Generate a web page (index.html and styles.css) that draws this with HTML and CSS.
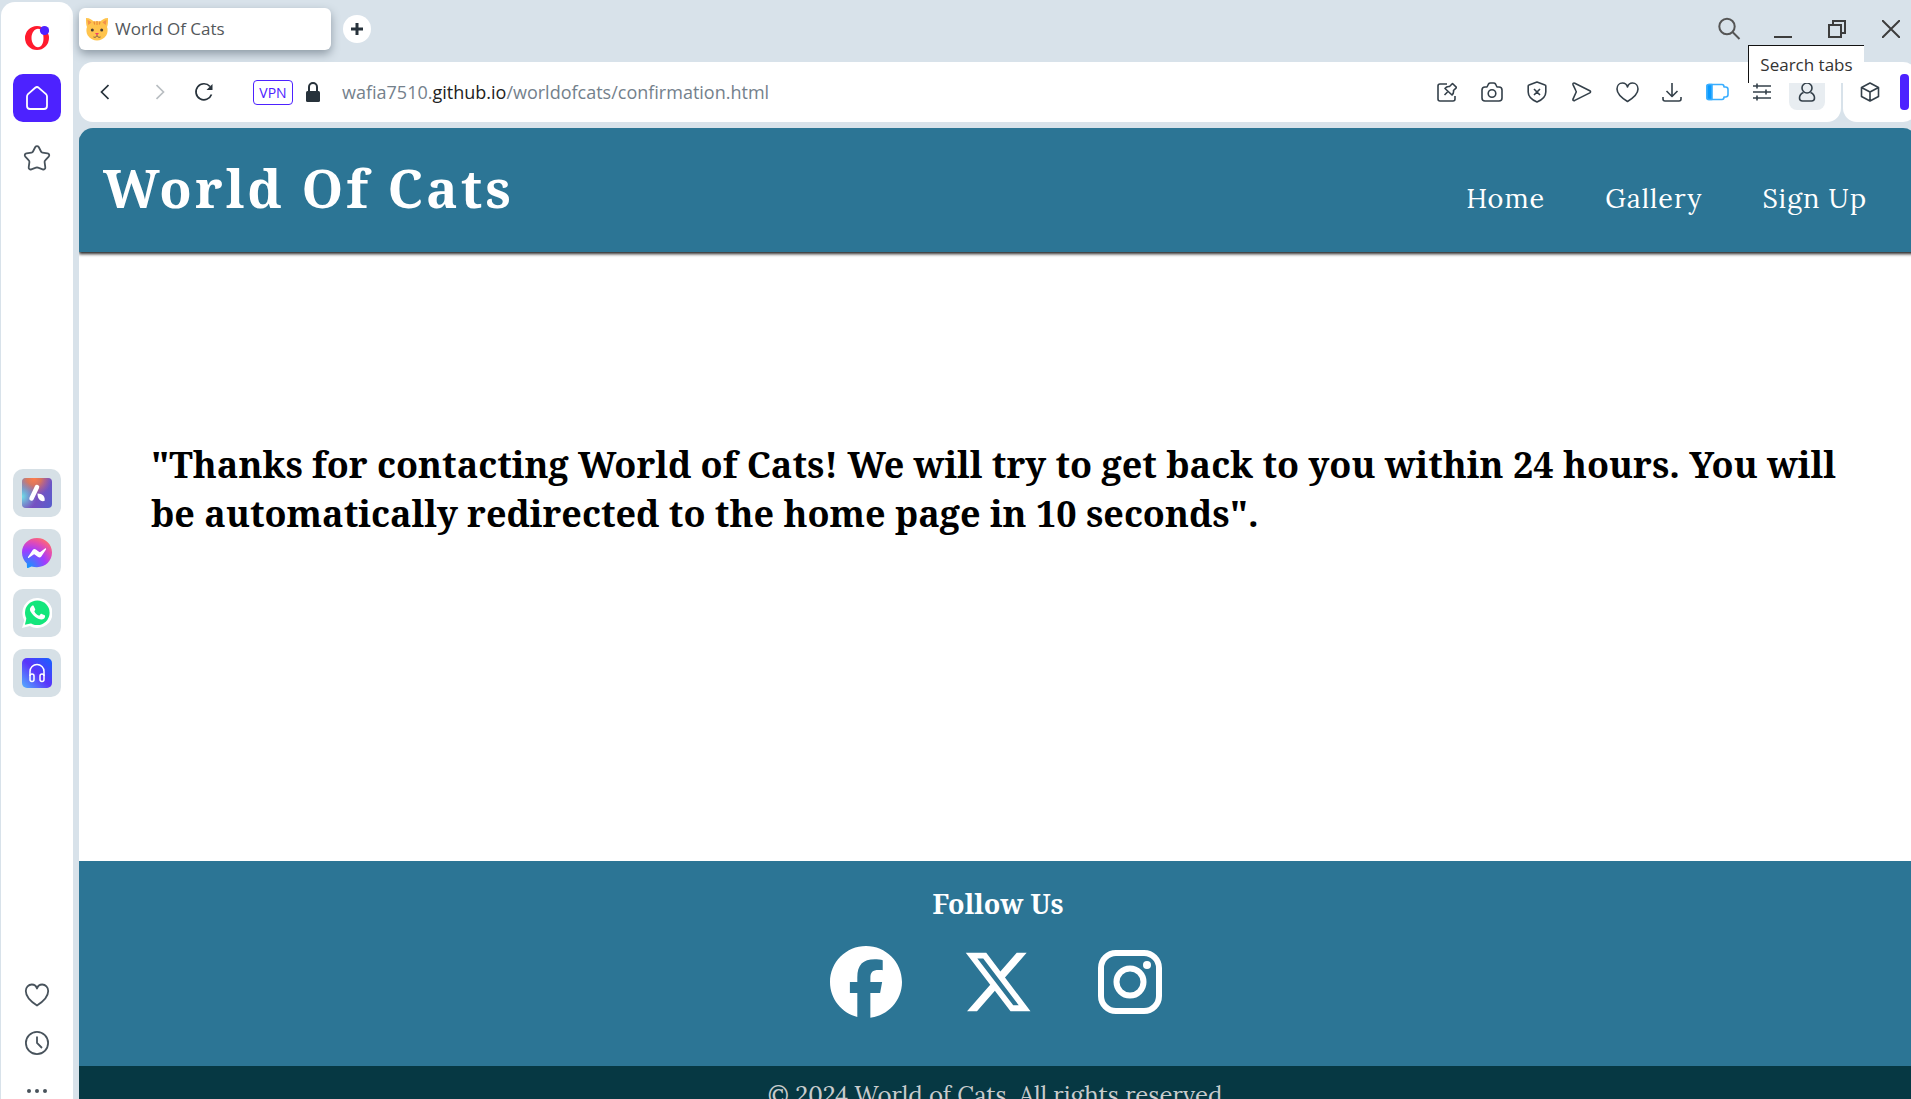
FILE: index.html
```html
<!DOCTYPE html>
<html lang="en">
<head>
<meta charset="utf-8">
<title>World Of Cats</title>
<link rel="stylesheet" href="styles.css">
</head>
<body>
<div class="browser">
  <aside class="sidebar">
    <div class="side-top">
      <button class="side-btn" aria-label="Opera menu">
        <svg width="24" height="26" viewBox="0 0 24 26"><path fill="#ff1b2d" fill-rule="evenodd" d="M12 1a12 12 0 1 0 0 24a12 12 0 0 0 0-24zM13 3.800c3.500 0 5.500 4 5.500 9.200s-2 9.200-5.500 9.200S6.500 18 6.500 13s3-9.200 6.500-9.200z"/><circle cx="19.500" cy="5.500" r="4.600" fill="#4d22ff"/></svg>
      </button>
      <button class="side-btn home" aria-label="Home">
        <svg width="24" height="26" viewBox="0 0 24 26" fill="none" stroke="#fff" stroke-width="1.800" stroke-linejoin="round"><path d="M2 11.500c0-1 .3-1.700 1-2.400l7.200-6.300c1.100-1 2.500-1 3.600 0L21 9.100c.7.700 1 1.400 1 2.400V21c0 2-1 3-3 3H5c-2 0-3-1-3-3z"/></svg>
      </button>
      <button class="side-btn" aria-label="Bookmarks">
        <svg width="28" height="28" viewBox="0 0 28 28" fill="none" stroke="#48535c" stroke-width="1.800" stroke-linejoin="round"><path d="M12.300 3c.8-1.300 2.600-1.300 3.400 0l2.300 4.500c.3.600.8 1 1.500 1.100l5 .8c1.700.3 2.300 2 1.200 3.200l-3.500 3.700c-.5.500-.7 1.100-.6 1.800l.7 5.200c.2 1.500-1.200 2.600-2.600 2l-4.700-1.600a3 3 0 0 0-2 0l-4.700 1.600c-1.400.6-2.800-.5-2.600-2l.7-5.200c.1-.7-.1-1.300-.6-1.800l-3.500-3.700c-1.100-1.200-.5-2.900 1.200-3.200l5-.8c.7-.1 1.200-.5 1.500-1.100z"/></svg>
      </button>
    </div>
    <div class="side-apps">
      <button class="side-btn app" aria-label="Aria">
        <svg width="30" height="30" viewBox="0 0 30 30"><defs><linearGradient id="ga" x1="0" y1=".3" x2="1" y2=".8"><stop offset="0" stop-color="#7a8fc0"/><stop offset=".5" stop-color="#7a50c0"/><stop offset="1" stop-color="#5a5ccb"/></linearGradient><radialGradient id="gb" cx=".4" cy="0" r=".6"><stop offset="0" stop-color="#ff7d4c"/><stop offset=".4" stop-color="#e8784f" stop-opacity=".85"/><stop offset="1" stop-color="#c46a8c" stop-opacity="0"/></radialGradient><radialGradient id="gc" cx="0" cy=".62" r=".5"><stop offset="0" stop-color="#6fe0e8"/><stop offset="1" stop-color="#6fa0d8" stop-opacity="0"/></radialGradient></defs><rect width="30" height="30" rx="4" fill="url(#ga)"/><rect width="30" height="30" rx="4" fill="url(#gb)"/><rect width="30" height="30" rx="4" fill="url(#gc)"/><path d="M15 9L9.500 20.500" stroke="#fff" stroke-width="4.500" stroke-linecap="round"/><path d="M15.500 15.500c5 0 8 3 7 7.500-5 1-7-3-7-7.500z" fill="#fff"/></svg>
      </button>
      <button class="side-btn app" aria-label="Messenger">
        <svg width="30" height="30" viewBox="0 0 30 30"><defs><radialGradient id="gm" cx=".2" cy="1" r="1.100"><stop offset="0" stop-color="#0b9bff"/><stop offset=".55" stop-color="#a13cff"/><stop offset=".8" stop-color="#e14cb5"/><stop offset="1" stop-color="#ff6b70"/></radialGradient></defs><path fill="url(#gm)" d="M15 0C6.500 0 0 6.200 0 14.600c0 4.400 1.800 8.200 4.800 10.900l.2 4c.1.500.6.700 1 .5l3.500-1.600c1.700.5 3.500.8 5.500.8 8.500 0 15-6.200 15-14.600S23.500 0 15 0z"/><path fill="#fff" d="M6 19l4.700-7c.7-1.100 2.200-1.400 3.200-.5l3.400 2.500c.3.200.7.200 1 0l4.700-3.500c.6-.5 1.400.3 1 .9l-4.700 7c-.7 1.100-2.200 1.400-3.200.6l-3.500-2.600a.8.800 0 0 0-1 0L7 19.800c-.6.500-1.400-.2-1-.8z"/></svg>
      </button>
      <button class="side-btn app" aria-label="WhatsApp">
        <svg width="30" height="30" viewBox="0 0 30 30"><path fill="#fff" d="M15 0a15 15 0 0 0-12.700 22.400L0 30l7.900-2.100A15 15 0 1 0 15 0z"/><circle cx="15.300" cy="14.800" r="12.300" fill="#14e67c"/><path d="M4.500 20l-1.600 6.800 6.800-1.600z" fill="#14e67c"/><path fill="#fff" d="M9.800 8c.6-.6 1.600-.6 1.900 0l1.500 3.300c.2.500 0 .9-.9 2 .9 2 2.600 3.600 4.900 4.500l1.500-1.700c.3-.4.700-.4 1.100-.2l2.900 1.400c.8.400.3 2.400-.5 3.200-1.500 1.300-3.400 1.400-6 .3-3.700-1.500-6-4.400-7.700-7.200-1.200-2.300-.4-4.200 1.300-5.600z"/></svg>
      </button>
      <button class="side-btn app" aria-label="Player">
        <svg width="30" height="30" viewBox="0 0 30 30"><defs><linearGradient id="gp" x1="0" y1="1" x2="1" y2="0"><stop offset="0" stop-color="#55b0ff"/><stop offset=".5" stop-color="#5a34fa"/><stop offset="1" stop-color="#1763ff"/></linearGradient></defs><rect width="30" height="30" rx="5" fill="url(#gp)"/><g fill="none" stroke="#fff" stroke-width="1.500"><path d="M8 18v-4.500a7 7 0 0 1 14 0V18"/><rect x="8" y="16" width="4" height="7.500" rx="2"/><rect x="18" y="16" width="4" height="7.500" rx="2"/></g></svg>
      </button>
    </div>
    <div class="side-bottom">
      <button class="mini" aria-label="Pinboards"><svg width="26" height="24" viewBox="0 0 26 24" fill="none" stroke="#48535c" stroke-width="1.800" stroke-linejoin="round"><path d="M13 22.500C6 18 1.800 13.500 1.800 8c0-3.800 2.700-6.500 6-6.500 2.600 0 4.500 1.500 5.200 4 .7-2.500 2.600-4 5.200-4 3.300 0 6 2.700 6 6.500 0 5.500-4.200 10-11.200 14.500z"/></svg></button>
      <button class="mini" aria-label="History"><svg width="26" height="26" viewBox="0 0 26 26" fill="none" stroke="#48535c" stroke-width="1.800"><circle cx="13" cy="13" r="11.100"/><path d="M13 6.500V13l5 5"/></svg></button>
      <button class="mini" aria-label="More"><svg width="22" height="6" viewBox="0 0 22 6" fill="#48535c"><circle cx="3" cy="3" r="2"/><circle cx="11" cy="3" r="2"/><circle cx="19" cy="3" r="2"/></svg></button>
    </div>
  </aside>

  <div class="window">
    <div class="tabs">
      <div class="tab">
        <svg width="24" height="24" viewBox="0 0 24 24"><path fill="#ffc44d" d="M1 1c4 0 6 2 7.500 3.300h7C17 3 19 1 23 1c0 4 0 7-1 9 1 2 .8 6-.8 8.500C19 22 15 23.500 12 23.500S5 22 2.800 18.500C1.200 16 1 12 2 10 1 8 1 5 1 1z"/><path d="M2.500 3c1.700.5 3 1.400 4 2.500L3.300 8zM21.500 3c-1.700.5-3 1.400-4 2.500L20.700 8z" fill="#f29149"/><path d="M12 4v4M9 4.500l.7 3M15 4.500l-.7 3" stroke="#e98b3a" stroke-width="1.200"/><circle cx="7.300" cy="13" r="1.500" fill="#453a38"/><circle cx="16.700" cy="13" r="1.500" fill="#453a38"/><path d="M10 16h4l-2 2.500z" fill="#ed3f69"/><path d="M8.500 20c1.800.8 3-.2 3.500-1.500.5 1.300 1.700 2.300 3.500 1.500" fill="none" stroke="#7a5842"/></svg>
        <span>World Of Cats</span>
      </div>
      <button class="new-tab" aria-label="New tab"><svg width="12" height="12" viewBox="0 0 12 12" stroke="#27323b" stroke-width="3"><path d="M6 0v12M0 6h12"/></svg></button>
      <div class="win-controls">
        <button aria-label="Search tabs"><svg width="24" height="24" viewBox="0 0 24 24" fill="none" stroke="#555" stroke-width="2"><circle cx="10" cy="9.500" r="7.700"/><path d="M15.500 15l7 7"/></svg></button>
        <button aria-label="Minimize"><svg width="18" height="20" viewBox="0 0 18 20"><path d="M0 17h18v2H0z" fill="#3d3d3d"/></svg></button>
        <button aria-label="Restore"><svg width="18" height="18" viewBox="0 0 18 18" fill="none" stroke="#3d3d3d" stroke-width="2"><path d="M1 5h12v12H1zM5 5V1h12v12h-4"/></svg></button>
        <button aria-label="Close"><svg width="18" height="18" viewBox="0 0 18 18" stroke="#3d3d3d" stroke-width="2"><path d="M0 0l18 18M18 0L0 18"/></svg></button>
        <div class="tooltip" role="tooltip">Search tabs</div>
      </div>
    </div>

    <div class="toolbar">
      <div class="address">
        <button class="nav-btn" aria-label="Back"><svg width="9" height="16" viewBox="0 0 9 16" fill="none" stroke="#27323b" stroke-width="1.700"><path d="M8.500 1L1.500 8l7 7"/></svg></button>
        <button class="nav-btn" aria-label="Forward"><svg width="9" height="16" viewBox="0 0 9 16" fill="none" stroke="#b9bec2" stroke-width="1.700"><path d="M.5 1l7 7-7 7"/></svg></button>
        <button class="nav-btn reload" aria-label="Reload"><svg width="20" height="20" viewBox="0 0 20 20" fill="none" stroke="#27323b" stroke-width="1.700"><path d="M17.500 12.500A8 8 0 1 1 16 4.500"/><path d="M18.500 2v6h-6z" fill="#27323b" stroke="none"/></svg></button>
        <button class="vpn">VPN</button>
        <svg class="lock" width="14" height="20" viewBox="0 0 14 20"><path d="M3 10V5a4 4 0 0 1 8 0v5" fill="none" stroke="#27323b" stroke-width="2"/><rect y="9" width="14" height="11" rx="1.500" fill="#27323b"/></svg>
        <span class="url">wafia7510.<b>github.io</b>/worldofcats/confirmation.html</span>
        <div class="tools">
          <button aria-label="Edit page"><svg width="20" height="20" viewBox="0 0 20 20"><path d="M10 2H3a2 2 0 0 0-2 2v13a2 2 0 0 0 2 2h13a2 2 0 0 0 2-2v-3M7.500 13l3-3M12.500 4.500l3-3 4 4-3 3c.3 2-.2 3.500-1.500 4.500L8 6.500c1-1.500 2.500-2.200 4.500-2z"/></svg></button>
          <button aria-label="Snapshot"><svg width="22" height="20" viewBox="0 0 22 20"><path d="M1 8c0-2 1-3 3-3h2l1.500-3c.4-.7 1-1 2-1h3c1 0 1.600.3 2 1L16 5h2c2 0 3 1 3 3v8c0 2-1 3-3 3H4c-2 0-3-1-3-3z"/><circle cx="11" cy="11.500" r="3.800"/></svg></button>
          <button aria-label="Ad blocker"><svg width="20" height="22" viewBox="0 0 20 22"><path d="M10 1l8 3c.5 0 .8.400.8 1v6c0 5-4 8-8.800 10-4.800-2-8.800-5-8.800-10V5c0-.6.300-1 .8-1zM7 8l6 6M13 8l-6 6"/></svg></button>
          <button aria-label="My Flow"><svg width="20" height="20" viewBox="0 0 20 20"><path d="M2.800 1.200l15 7.500c1 .6 1 1.600 0 2.200l-15 7.500c-1.400.6-2.200-.2-1.700-1.500L4 10.500c.3-.5.300-.9 0-1.500L1.100 2.800C.6 1.500 1.400.6 2.800 1.200z"/></svg></button>
          <button aria-label="Favourite"><svg width="23" height="21" viewBox="0 0 23 21"><path d="M11.500 19.500C5 15.500 1 11.500 1 7c0-3.500 2.300-6 5.500-6 2.500 0 4.300 1.500 5 4 .7-2.500 2.500-4 5-4C19.700 1 22 3.500 22 7c0 4.500-4 8.500-10.500 12.500z"/></svg></button>
          <button aria-label="Downloads"><svg width="20" height="20" viewBox="0 0 20 20"><path d="M10 1v13M4.500 9l5.500 5.500L15.500 9M1 15v2a2 2 0 0 0 2 2h14a2 2 0 0 0 2-2v-2"/></svg></button>
          <button aria-label="Battery saver"><svg class="battery" width="23" height="18" viewBox="0 0 23 18"><path d="M3 1.500h13c1.500 0 2 .8 2 2.500h1.500c1.400 0 2.500 1 2.500 2.500v5c0 1.500-1 2.500-2.500 2.500H18c0 1.700-.5 2.500-2 2.500H3c-1.300 0-2-.7-2-2v-11c0-1.300.7-2 2-2z"/><path d="M1 3c0-1 1-1.500 2-1.500h3v15H3c-1 0-2-.5-2-1.500z" fill="#0a9bff"/></svg></button>
          <button aria-label="Easy setup"><svg width="20" height="18" viewBox="0 0 20 18"><path d="M1 3h18M1 9h18M1 15h18M5 .5v5M14 6.500v5M5 12.500v5"/></svg></button>
          <button class="profile" aria-label="Profile"><svg width="18" height="20" viewBox="0 0 18 20"><circle cx="9" cy="6" r="5"/><path d="M5.500 10.500C3 11.500 1.500 13.500 1.500 16c0 2 1 3 3 3h9c2 0 3-1 3-3 0-2.500-1.500-4.500-4-5.500"/></svg></button>
        </div>
      </div>
      <div class="extensions">
        <button aria-label="Extensions"><svg width="20" height="20" viewBox="0 0 20 20"><path d="M10 1l8.500 4.500v9L10 19l-8.500-4.500v-9zM1.500 5.500L10 10l8.500-4.500M10 10v9"/></svg></button>
        <span class="pill"></span>
      </div>
    </div>

    <div class="page">
      <header class="header">
        <h1>World Of Cats</h1>
        <nav><a href="#home">Home</a><a href="#gallery">Gallery</a><a href="#signup">Sign Up</a></nav>
      </header>
      <main class="content">
        <h2>"Thanks for contacting World of Cats! We will try to get back to you within 24 hours. You will be automatically redirected to the home page in 10 seconds".</h2>
      </main>
      <footer>
        <div class="follow">
          <h3>Follow Us</h3>
          <div class="social">
            <a href="#facebook" aria-label="Facebook"><svg width="72" height="72" viewBox="0 0 512 512" fill="#fff"><path d="M512 256C512 114.600 397.400 0 256 0S0 114.600 0 256C0 376 82.700 476.800 194.200 504.500V334.200H141.400V256h52.800V222.300c0-87.100 39.400-127.500 125-127.500c16.200 0 44.200 3.200 55.700 6.400V172c-6-.6-16.500-1-29.600-1c-42 0-58.200 15.900-58.200 57.200V256h83.600l-14.400 78.200H287V510.100C413.800 494.800 512 386.900 512 256z"/></svg></a>
            <a href="#x" aria-label="X"><svg width="72" height="72" viewBox="0 0 512 512" fill="#fff"><path d="M389.200 48h70.600L305.600 224.200 487 464H345L233.700 318.600 106.500 464H35.800L200.700 275.500 26.800 48H172.400L272.900 180.900 389.200 48zM364.400 421.800h39.100L151.100 88h-42L364.400 421.800z"/></svg></a>
            <a href="#instagram" aria-label="Instagram"><svg width="72" height="72" viewBox="0 0 72 72" fill="none" stroke="#fff" stroke-width="6"><rect x="7" y="7" width="58" height="58" rx="15"/><circle cx="36" cy="36" r="13.500"/><circle cx="53" cy="19" r="4" fill="#fff" stroke="none"/></svg></a>
          </div>
        </div>
        <p class="copyright">© 2024 World of Cats. All rights reserved.</p>
      </footer>
    </div>
  </div>
</div>
</body>
</html>
```
FILE: styles.css
```css
* {
  box-sizing: border-box;
}

body {
  margin: 0;
  background: #d8e2ea;
  font-family: "Open Sans", "Noto Sans", sans-serif;
}

button {
  display: flex;
  align-items: center;
  justify-content: center;
  padding: 0;
  border: 0;
  background: none;
  font-family: inherit;
}

h1, h2, h3, p {
  margin: 0;
}

.browser {
  display: flex;
  gap: 6px;
  height: 100vh;
  padding-left: 1px;
  overflow: hidden;
}

/* Sidebar */
.sidebar {
  display: flex;
  flex-direction: column;
  align-items: center;
  width: 72px;
  margin-top: 2px;
  padding-top: 12px;
  border-radius: 14px 14px 0 0;
  background: #fff;
}

.side-top, .side-apps {
  display: flex;
  flex-direction: column;
  gap: 12px;
}

.side-apps {
  margin-top: 287px;
}

.side-btn {
  width: 48px;
  height: 48px;
  border-radius: 10px;
}

.home {
  background: #4d22ff;
}

.app {
  background: #d6e0e6;
}

.side-bottom {
  display: flex;
  flex-direction: column;
  gap: 32px;
  margin-top: auto;
}

.mini {
  width: 48px;
  height: 16px;
}

.mini svg {
  flex: none;
}

/* Tab strip */
.window {
  display: flex;
  flex: 1;
  flex-direction: column;
  min-width: 0;
}

.tabs {
  display: flex;
  flex: none;
  align-items: center;
  gap: 12px;
  height: 62px;
  padding-bottom: 4px;
}

.tab {
  display: flex;
  align-items: center;
  gap: 6px;
  width: 252px;
  height: 42px;
  padding-left: 6px;
  border-radius: 6px;
  background: #fff;
  box-shadow: 0 4px 10px #8e9aa5;
  color: #54585b;
  font-size: 17px;
  line-height: 22px;
}

.new-tab {
  width: 28px;
  height: 28px;
  border-radius: 50%;
  background: #fff;
}

.win-controls {
  position: relative;
  display: flex;
  margin-left: auto;
  margin-right: -7px;
}

.win-controls button {
  width: 54px;
  height: 30px;
}

.tooltip {
  position: absolute;
  top: 31px;
  right: 54px;
  z-index: 2;
  width: 116px;
  height: 38px;
  border-top: 1px solid #111;
  border-left: 1px solid #111;
  background: #fff;
  color: #333;
  font-size: 17px;
  line-height: 37px;
  text-align: center;
}

/* Address bar */
.toolbar {
  display: flex;
  flex: none;
  gap: 2px;
  height: 60px;
  margin-right: -6px;
}

.address {
  display: flex;
  flex: 1;
  align-items: center;
  border-radius: 14px;
  background: #fff;
}

.nav-btn {
  width: 50px;
  height: 36px;
}

.nav-btn + .nav-btn {
  width: 62px;
}

.nav-btn + .reload {
  width: 26px;
}

.vpn {
  width: 40px;
  height: 25px;
  margin-left: 36px;
  border: 1px solid #4d22ff;
  border-radius: 4px;
  color: #4d22ff;
  font-size: 14px;
}

.lock {
  margin: 0 22px 0 13px;
}

.url {
  color: #74818c;
  font-size: 18px;
}

.url b {
  color: #222;
  font-weight: 400;
}

.tools {
  display: flex;
  gap: 9px;
  margin-left: auto;
  padding-right: 16px;
}

.tools button {
  width: 36px;
  height: 36px;
}

.tools svg, .extensions svg {
  fill: none;
  stroke: #34404a;
  stroke-width: 1.6;
  stroke-linejoin: round;
}

.tools .battery {
  stroke: #3aaeff;
}

.tools .profile {
  border-radius: 8px;
  background: #e8edf1;
}

.extensions {
  display: flex;
  align-items: center;
  gap: 12px;
  width: 74px;
  padding-left: 9px;
  border-radius: 14px;
  background: #fff;
}

.extensions button {
  width: 36px;
  height: 36px;
}

.pill {
  width: 9px;
  height: 36px;
  border-radius: 4px;
  background: #4d22ff;
}

/* Web page: runs slightly past the window's right edge */
.page {
  flex: 1;
  min-height: 0;
  margin-top: 6px;
  margin-right: -6px;
  border-radius: 14px 14px 0 0;
  overflow: hidden;
  background: #fff;
  font-family: "Noto Serif", "DejaVu Serif Condensed", "DejaVu Serif", serif;
}

.header {
  display: flex;
  align-items: center;
  justify-content: space-between;
  height: 124px;
  padding: 0 50px 4px 24px;
  background: #2c7595;
  box-shadow: 0 2px 3px #222;
  color: #fff;
}

.header h1 {
  font-size: 53px;
  letter-spacing: 3px;
  line-height: 120px;
}

.header nav {
  display: flex;
  gap: 60px;
  padding-top: 20px;
}

.header a {
  color: #fff;
  font-family: Lora, "Liberation Serif", serif;
  font-size: 27px;
  letter-spacing: 1px;
  text-decoration: none;
}

.content {
  padding: 188px 78px 323px 72px;
}

.content h2 {
  font-size: 36px;
  line-height: 49px;
}

.follow {
  height: 205px;
  padding-top: 25px;
  background: #2c7595;
  color: #fff;
  text-align: center;
}

.follow h3 {
  font-size: 27px;
  line-height: 36px;
}

.social {
  display: flex;
  justify-content: center;
  gap: 60px;
  padding-top: 24px;
}

.social svg {
  display: block;
}

.copyright {
  padding: 14px 0;
  background: #063843;
  color: #c8cccd;
  font-family: Lora, "Liberation Serif", serif;
  font-size: 24px;
  line-height: 32px;
  text-align: center;
}
```
